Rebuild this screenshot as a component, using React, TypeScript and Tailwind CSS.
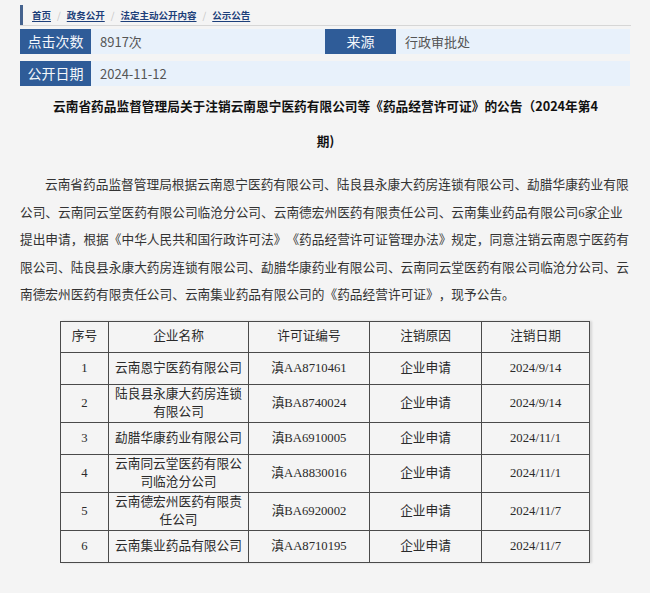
import React from "react";

const SANS = { fontFamily: '"Noto Sans CJK SC", "Noto Sans", sans-serif' };

const rows = [
  { no: "1", name: "云南恩宁医药有限公司", lic: "AA8710461", reason: "企业申请", date: "2024/9/14" },
  { no: "2", name: "陆良县永康大药房连锁有限公司", lic: "BA8740024", reason: "企业申请", date: "2024/9/14" },
  { no: "3", name: "勐腊华康药业有限公司", lic: "BA6910005", reason: "企业申请", date: "2024/11/1" },
  { no: "4", name: "云南同云堂医药有限公司临沧分公司", lic: "AA8830016", reason: "企业申请", date: "2024/11/1" },
  { no: "5", name: "云南德宏州医药有限责任公司", lic: "BA6920002", reason: "企业申请", date: "2024/11/7" },
  { no: "6", name: "云南集业药品有限公司", lic: "AA8710195", reason: "企业申请", date: "2024/11/7" },
];

function Crumb({ children }: { children: React.ReactNode }) {
  return <span className="underline decoration-[#1d3f7a] underline-offset-[2px]">{children}</span>;
}

function Sep() {
  return <span className="mx-[6px] font-normal text-[#c4c4c4]">/</span>;
}

export default function App() {
  return (
    <div className="min-h-[593px] w-[650px] bg-[#f4f4f4] pl-[20px] pt-[5px] [text-spacing-trim:space-all]" style={SANS}>
      <div className="w-[611px]">
        {/* breadcrumb */}
        <div className="flex h-[21px] border-b border-[#d6d6d6]">
          <div className="h-[20px] w-[3px] bg-[#45638f]" />
          <nav className="ml-[9px] flex h-[20px] items-center text-[9.5px] font-bold text-[#1d3f7a]">
            <Crumb>首页</Crumb>
            <Sep />
            <Crumb>政务公开</Crumb>
            <Sep />
            <Crumb>法定主动公开内容</Crumb>
            <Sep />
            <Crumb>公示公告</Crumb>
          </nav>
        </div>

        {/* info rows */}
        <div className="mt-[3px] flex w-[610px] flex-col gap-[7px] text-[13px]">
          <div className="grid h-[25px] grid-cols-2 bg-[#e8f1fb]">
            <div className="flex items-stretch">
              <div className="flex w-[71px] items-center justify-center bg-[#2f5c98] text-[14px] text-[#f4f7fb]">点击次数</div>
              <div className="flex items-center pl-[9px] text-[#555]">8917次</div>
            </div>
            <div className="flex items-stretch">
              <div className="flex w-[71px] items-center justify-center bg-[#2f5c98] text-[14px] text-[#f4f7fb]">来源</div>
              <div className="flex items-center pl-[9px] text-[#555]">行政审批处</div>
            </div>
          </div>
          <div className="grid h-[25px] grid-cols-2 bg-[#e8f1fb]">
            <div className="flex items-stretch">
              <div className="flex w-[71px] items-center justify-center bg-[#2f5c98] text-[14px] text-[#f4f7fb]">公开日期</div>
              <div className="flex items-center pl-[9px] text-[#555]">2024-11-12</div>
            </div>
            <div />
          </div>
        </div>

        {/* title */}
        <h1 className="mx-auto mt-[2px] w-[550px] text-center text-[12.7px] font-bold leading-[35px] text-[#111]">
          云南省药品监督管理局关于注销云南恩宁医药有限公司等《药品经营许可证》的公告（2024年第4期)
        </h1>

        {/* body */}
        <p
          className="mt-[14px] w-[612px] indent-[25px] text-[12.7px] leading-[27.5px] text-[#333]"
          style={{ fontFamily: '"Liberation Serif", "Noto Sans CJK SC", serif' }}
        >
          云南省药品监督管理局根据云南恩宁医药有限公司、陆良县永康大药房连锁有限公司、勐腊华康药业有限公司、云南同云堂医药有限公司临沧分公司、云南德宏州医药有限责任公司、云南集业药品有限公司6家企业提出申请，根据《中华人民共和国行政许可法》《药品经营许可证管理办法》规定，同意注销云南恩宁医药有限公司、陆良县永康大药房连锁有限公司、勐腊华康药业有限公司、云南同云堂医药有限公司临沧分公司、云南德宏州医药有限责任公司、云南集业药品有限公司的《药品经营许可证》，现予公告。
        </p>

        {/* table */}
        <table
          className="ml-[40px] mt-[11px] w-[529px] table-fixed border-collapse text-center text-[12.7px] leading-[18.5px] text-[#2a2a2a] shadow-[2px_0_2px_rgba(0,0,0,0.12)]"
          style={{ fontFamily: '"Liberation Serif", "Noto Sans CJK SC", serif' }}
        >
          <colgroup>
            <col className="w-[48px]" />
            <col className="w-[140px]" />
            <col className="w-[121px]" />
            <col className="w-[112px]" />
            <col className="w-[108px]" />
          </colgroup>
          <thead>
            <tr className="h-[31px]">
              <th className="border border-[#4a4a4a] p-0 font-normal">序号</th>
              <th className="border border-[#4a4a4a] p-0 font-normal">企业名称</th>
              <th className="border border-[#4a4a4a] p-0 font-normal">许可证编号</th>
              <th className="border border-[#4a4a4a] p-0 font-normal">注销原因</th>
              <th className="border border-[#4a4a4a] p-0 font-normal">注销日期</th>
            </tr>
          </thead>
          <tbody>
            {rows.map((r) => (
              <tr key={r.no} className="h-[32px]">
                <td className="border border-[#4a4a4a] p-0">{r.no}</td>
                <td className="border border-[#4a4a4a] px-[5px] py-0">{r.name}</td>
                <td className="border border-[#4a4a4a] p-0">滇{r.lic}</td>
                <td className="border border-[#4a4a4a] p-0">{r.reason}</td>
                <td className="border border-[#4a4a4a] p-0">{r.date}</td>
              </tr>
            ))}
          </tbody>
        </table>
      </div>
    </div>
  );
}
